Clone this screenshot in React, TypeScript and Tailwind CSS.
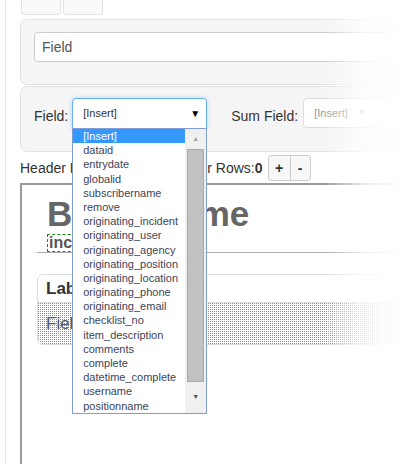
const fields = [
  "[Insert]",
  "dataid",
  "entrydate",
  "globalid",
  "subscribername",
  "remove",
  "originating_incident",
  "originating_user",
  "originating_agency",
  "originating_position",
  "originating_location",
  "originating_phone",
  "originating_email",
  "checklist_no",
  "item_description",
  "comments",
  "complete",
  "datetime_complete",
  "username",
  "positionname",
]

function FieldList() {
  return (
    <div className="absolute left-0 top-[30px] z-20 flex w-[135px] border border-[#7f9ed6] bg-white">
      <ul className="flex-1 py-0">
        {fields.map((f, i) => (
          <li
            key={f}
            className={`h-[14.2px] pl-[10px] text-[11px] leading-[14px] ${
              i === 0 ? "bg-[#3399ff] text-white" : "text-[#3d4456]"
            }`}
          >
            {f}
          </li>
        ))}
      </ul>
      {/* scrollbar */}
      <div className="flex w-[21px] flex-col items-center bg-[#f0f0f0]">
        <div className="flex h-[20px] items-center justify-center text-[7px] text-[#a3a3a3]">▲</div>
        <div className="h-[233px] w-[17px] border border-[#aaa] bg-[#c1c1c1]" />
        <div className="flex flex-1 items-center justify-center text-[7px] text-[#505050]">▼</div>
      </div>
    </div>
  )
}

export default function App() {
  return (
    <div className="relative h-[464px] w-[404px] overflow-hidden bg-white font-['Liberation_Sans',Arial,sans-serif] text-[#333]">
      <div className="ml-[5px] h-full w-[700px] border-l border-[#e6e6e6] pl-[14px]">
        {/* small tab buttons */}
        <div className="flex gap-[2px] pl-px">
          <div className="h-[15px] w-[40px] rounded-b-[4px] border border-t-0 border-[#e2e2e2] bg-[#fafafa]" />
          <div className="h-[15px] w-[40px] rounded-b-[4px] border border-t-0 border-[#e2e2e2] bg-[#fafafa]" />
        </div>

        {/* title field panel */}
        <div className="mt-[4px] rounded-[7px] border border-[#e3e3e3] bg-[#f5f5f5] px-[13px] pt-[12px] pb-[22px]">
          <div className="flex h-[30px] items-center rounded-[4px] border border-[#ccc] bg-white px-[7px] text-[14px] text-[#555]">
            Field
          </div>
        </div>

        {/* field selectors */}
        <div className="mt-[1px] flex h-[66px] items-start rounded-[7px] border border-[#e3e3e3] bg-[#f5f5f5] px-[13px] pt-[11px]">
          <span className="mt-[8px] text-[14px] leading-[20px] text-[#333]">Field:</span>
          <div className="relative ml-[4px]">
            <div className="flex h-[31px] w-[135px] items-center justify-between rounded-t-[4px] border border-[#66afe9] bg-white pl-[10px] pr-[6px] text-[11px] text-[#333] shadow-[0_0_4px_rgba(102,175,233,0.5)]">
              <span>[Insert]</span>
              <span className="text-[10px] text-black">▼</span>
            </div>
            <FieldList />
          </div>
          <span className="ml-[24px] mt-[8px] text-[14px] leading-[20px] text-[#333]">Sum Field:</span>
          <div className="ml-[5px] flex h-[30px] w-[134px] items-center justify-between rounded-[4px] border border-[#ddd] bg-white pl-[10px] pr-[10px] text-[11px] text-[#999]">
            <span>[Insert]</span>
            <span className="mr-[60px] text-[9px] text-[#bbb]">▼</span>
          </div>
        </div>

        {/* header/footer rows */}
        <div className="mt-[3px] flex h-[26px] items-center text-[14px] text-[#333]">
          <span>
            Header Rows:<b>0</b>
          </span>
          <div className="ml-[5px] flex">
            <button className="h-[26px] w-[22px] rounded-l-[3px] border border-[#ccc] bg-[#f7f7f7] text-[14px]">+</button>
            <button className="-ml-px h-[26px] w-[21px] rounded-r-[3px] border border-[#ccc] bg-[#f7f7f7] text-[14px]">-</button>
          </div>
          <span className="ml-[8px]">
            Footer Rows:<b>0</b>
          </span>
          <div className="ml-[5px] flex">
            <button className="h-[26px] w-[23px] rounded-l-[3px] border border-[#ccc] bg-[#f7f7f7] text-[14px] font-bold">+</button>
            <button className="-ml-px h-[26px] w-[21px] rounded-r-[3px] border border-[#ccc] bg-[#f7f7f7] text-[14px] font-bold">-</button>
          </div>
        </div>

        {/* report canvas */}
        <div className="mt-[2px] h-[400px] border-l-[2px] border-t-[2px] border-[#9a9a9a] pl-[15px] pt-[9px]">
          <div className="pl-[10px] text-[35px] font-bold leading-[40px] text-[#666]">Batch Name</div>
          <div className="ml-[10px] flex">
            <div className="border border-dashed border-[#1a8a1a] px-px text-[16px] font-bold leading-[16px] text-[#555]">
              incident
            </div>
          </div>
          <div className="h-px bg-[#aaa]" />
          <div className="mt-[21px] overflow-hidden rounded-[6px] border border-[#ddd]">
            <div className="flex h-[27px] items-center bg-white pl-[8px] text-[17px] font-bold text-[#333]">Label</div>
            <div className="flex h-[42px] items-center border-t border-[#ddd] bg-[linear-gradient(to_right,transparent_1px,white_1px),linear-gradient(to_bottom,#8f8f8f_1px,white_1px)] bg-[length:2px_2px] pl-[8px] text-[17px] text-[#4a5570]">
              Field
            </div>
          </div>
        </div>
      </div>

      {/* right edge fade */}
      <div className="pointer-events-none absolute right-0 top-0 z-30 h-full w-[80px] bg-gradient-to-r from-transparent via-white/80 to-white" />
    </div>
  )
}
